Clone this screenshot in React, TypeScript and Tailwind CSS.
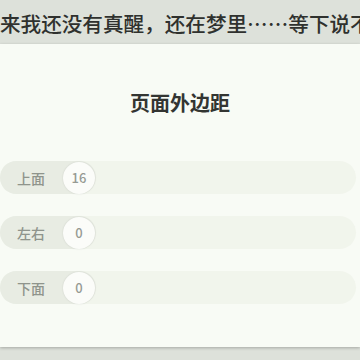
import React from "react";

const FONT = { fontFamily: '"Noto Sans CJK SC", "Noto Sans", sans-serif' };

function Row({ label, value }: { label: string; value: string }) {
  return (
    <div className="flex h-[33px] items-center rounded-full bg-[#f1f5ec] mr-[4px]">
      <div className="flex h-full w-[96px] items-center rounded-full bg-[#e8ece3] pl-[17px]">
        <span className="text-[14px] font-medium leading-none text-[#8f948c]">{label}</span>
        <div className="ml-[18px] flex h-[32px] w-[32px] items-center justify-center rounded-full bg-[#fbfcf9] shadow-[0_0_2px_rgba(0,0,0,0.12)]">
          <span className="text-[13px] font-medium leading-none text-[#969a93]">{value}</span>
        </div>
      </div>
    </div>
  );
}

export default function App() {
  return (
    <div className="flex h-[360px] w-[360px] flex-col overflow-hidden bg-[#dde1da]" style={FONT}>
      <div className="flex h-[44px] items-center overflow-hidden whitespace-nowrap pt-[3px]">
        <span className="text-[20.6px] font-medium leading-none text-[#2f312e]">来我还没有真醒，还在梦里……等下说不定</span>
      </div>
      <div className="flex h-[303px] flex-col bg-[#f8fbf5] shadow-[0_1px_3px_rgba(0,0,0,0.25)]">
        <div className="pt-[45px] text-center text-[20px] font-bold leading-[28px] text-[#333532]">页面外边距</div>
        <div className="mt-[44px] flex flex-col gap-[22px]">
          <Row label="上面" value="16" />
          <Row label="左右" value="0" />
          <Row label="下面" value="0" />
        </div>
      </div>
    </div>
  );
}
